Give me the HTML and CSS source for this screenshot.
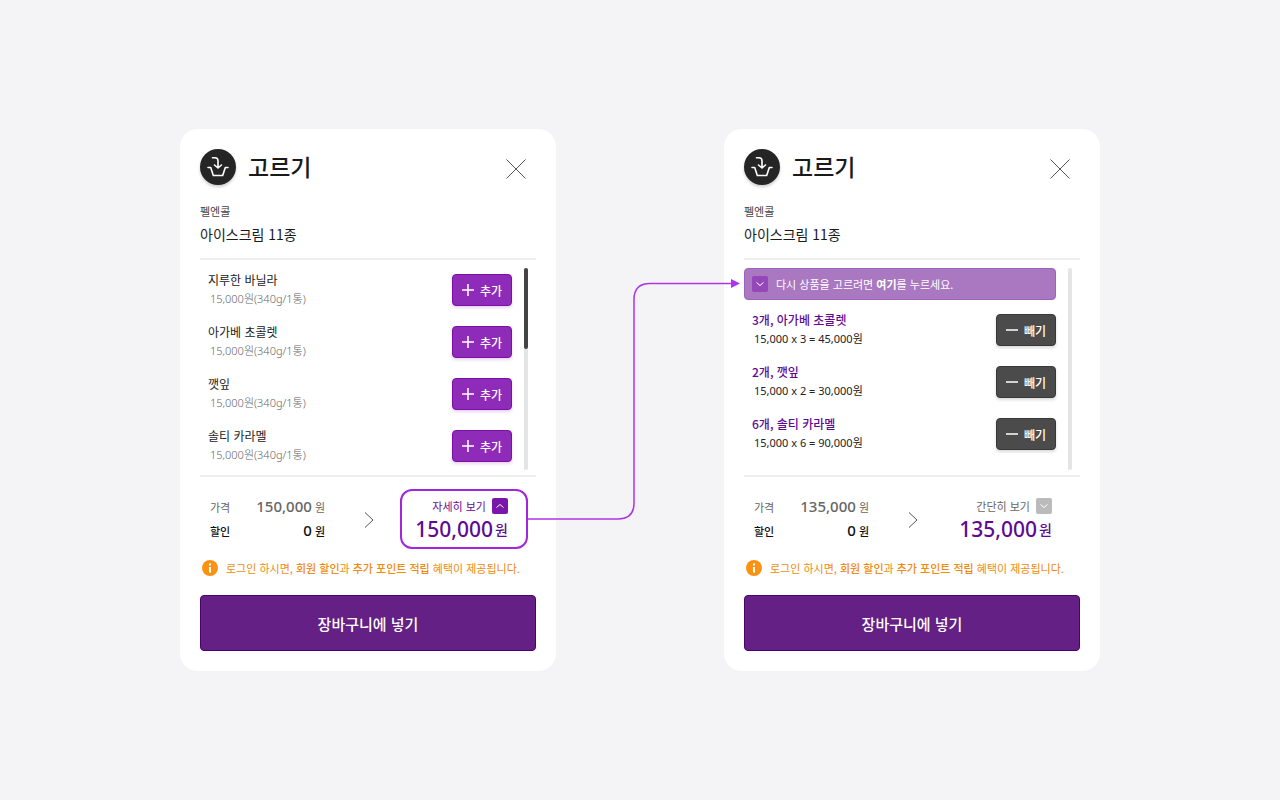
FILE: index.html
```html
<!DOCTYPE html>
<html lang="ko">
<head>
  <meta charset="UTF-8">
  <meta name="viewport" content="width=device-width, initial-scale=1.0">
  <title>고르기</title>
  <link rel="stylesheet" href="styles.css">
</head>
<body>
  <main class="stage">
    <!-- product list -->
    <section class="card">
      <header class="card-header">
        <span class="logo">
          <svg viewBox="0 0 36 36" width="36" height="36">
            <path d="M12.500 8.800h2.500q3 0 3 3V18.500M14.500 16l3.500 3 3.500-3M8 18.500h2.700l2.600 8h9.400l2.600-8H28" />
          </svg>
        </span>
        <h1>고르기</h1>
        <button type="button" class="close" aria-label="닫기">
          <svg viewBox="0 0 20 20" width="20" height="20"><path d="M.5.5l19 19M19.500.5l-19 19" /></svg>
        </button>
      </header>
      <p class="brand">펠엔콜</p>
      <h2>아이스크림 11종</h2>

      <div class="list-area">
        <ul class="list">
          <li>
            <div><p class="name">지루한 바닐라</p><p class="price">15,000원(340g/1통)</p></div>
            <button type="button" class="add"><svg viewBox="0 0 12 12" width="12" height="12"><path d="M6 0v12M0 6h12" /></svg>추가</button>
          </li>
          <li>
            <div><p class="name">아가베 초콜렛</p><p class="price">15,000원(340g/1통)</p></div>
            <button type="button" class="add"><svg viewBox="0 0 12 12" width="12" height="12"><path d="M6 0v12M0 6h12" /></svg>추가</button>
          </li>
          <li>
            <div><p class="name">깻잎</p><p class="price">15,000원(340g/1통)</p></div>
            <button type="button" class="add"><svg viewBox="0 0 12 12" width="12" height="12"><path d="M6 0v12M0 6h12" /></svg>추가</button>
          </li>
          <li>
            <div><p class="name">솔티 카라멜</p><p class="price">15,000원(340g/1통)</p></div>
            <button type="button" class="add"><svg viewBox="0 0 12 12" width="12" height="12"><path d="M6 0v12M0 6h12" /></svg>추가</button>
          </li>
        </ul>
        <div class="track"><div class="thumb"></div></div>
      </div>

      <div class="summary">
        <dl class="amounts">
          <div><dt>가격</dt><dd><b>150,000</b> 원</dd></div>
          <div class="discount"><dt>할인</dt><dd><b>0</b> 원</dd></div>
        </dl>
        <svg class="arrow" viewBox="0 0 10 16" width="10" height="16"><path d="M1 .5L9 8l-8 7.500" /></svg>
        <div class="total outlined">
          <button type="button" class="toggle">자세히 보기
            <span class="toggle-icon"><svg viewBox="0 0 16 16" width="16" height="16"><path d="M4.500 9.500L8 6.500l3.500 3" /></svg></span>
          </button>
          <p class="sum"><b>150,000</b><span>원</span></p>
        </div>
      </div>

      <p class="notice">
        <svg viewBox="0 0 16 16" width="16" height="16"><circle cx="8" cy="8" r="8" /><path d="M8 3.500v2M8 7v5.500" /></svg>
        <span>로그인 하시면, <b>회원 할인</b>과 <b>추가 포인트 적립</b> 혜택이 제공됩니다.</span>
      </p>
      <button type="button" class="cart">장바구니에 넣기</button>
    </section>

    <div class="connector">
      <svg viewBox="0 0 212 244" width="212" height="244">
        <path class="line" d="M0 239h90q16 0 16-16V19.500q0-16 16-16h82" />
        <path class="head" d="M203-1l9 4.500-9 4.500z" />
      </svg>
    </div>

    <!-- picked items -->
    <section class="card">
      <header class="card-header">
        <span class="logo">
          <svg viewBox="0 0 36 36" width="36" height="36">
            <path d="M12.500 8.800h2.500q3 0 3 3V18.500M14.500 16l3.500 3 3.500-3M8 18.500h2.700l2.600 8h9.400l2.600-8H28" />
          </svg>
        </span>
        <h1>고르기</h1>
        <button type="button" class="close" aria-label="닫기">
          <svg viewBox="0 0 20 20" width="20" height="20"><path d="M.5.5l19 19M19.500.5l-19 19" /></svg>
        </button>
      </header>
      <p class="brand">펠엔콜</p>
      <h2>아이스크림 11종</h2>

      <div class="list-area">
        <div class="picked">
          <button type="button" class="back">
            <span class="toggle-icon"><svg viewBox="0 0 16 16" width="16" height="16"><path d="M4.500 6.500L8 9.500l3.500-3" /></svg></span>
            <span>다시 상품을 고르려면 <b>여기</b>를 누르세요.</span>
          </button>
          <ul class="list">
            <li>
              <div><p class="name">3개, 아가베 초콜렛</p><p class="price">15,000 x 3 = 45,000원</p></div>
              <button type="button" class="remove"><svg viewBox="0 0 12 12" width="12" height="12"><path d="M0 6h12" /></svg>빼기</button>
            </li>
            <li>
              <div><p class="name">2개, 깻잎</p><p class="price">15,000 x 2 = 30,000원</p></div>
              <button type="button" class="remove"><svg viewBox="0 0 12 12" width="12" height="12"><path d="M0 6h12" /></svg>빼기</button>
            </li>
            <li>
              <div><p class="name">6개, 솔티 카라멜</p><p class="price">15,000 x 6 = 90,000원</p></div>
              <button type="button" class="remove"><svg viewBox="0 0 12 12" width="12" height="12"><path d="M0 6h12" /></svg>빼기</button>
            </li>
          </ul>
        </div>
        <div class="track"></div>
      </div>

      <div class="summary">
        <dl class="amounts">
          <div><dt>가격</dt><dd><b>135,000</b> 원</dd></div>
          <div class="discount"><dt>할인</dt><dd><b>0</b> 원</dd></div>
        </dl>
        <svg class="arrow" viewBox="0 0 10 16" width="10" height="16"><path d="M1 .5L9 8l-8 7.500" /></svg>
        <div class="total">
          <button type="button" class="toggle muted">간단히 보기
            <span class="toggle-icon"><svg viewBox="0 0 16 16" width="16" height="16"><path d="M4.500 6.500L8 9.500l3.500-3" /></svg></span>
          </button>
          <p class="sum"><b>135,000</b><span>원</span></p>
        </div>
      </div>

      <p class="notice">
        <svg viewBox="0 0 16 16" width="16" height="16"><circle cx="8" cy="8" r="8" /><path d="M8 3.500v2M8 7v5.500" /></svg>
        <span>로그인 하시면, <b>회원 할인</b>과 <b>추가 포인트 적립</b> 혜택이 제공됩니다.</span>
      </p>
      <button type="button" class="cart">장바구니에 넣기</button>
    </section>
  </main>
</body>
</html>
```
FILE: styles.css
```css
* {
  box-sizing: border-box;
}

body {
  margin: 0;
  font-family: "Noto Sans CJK KR", sans-serif;
  font-size: 12px;
  color: #1a1a1a;
  background-color: #f4f4f7;
}

h1, h2, p, ul, dl, dd {
  margin: 0;
  padding: 0;
}

ul {
  list-style: none;
}

button {
  font: inherit;
  color: inherit;
  padding: 0;
  border: none;
  background: none;
  cursor: pointer;
}

svg {
  display: block;
  flex: none;
  fill: none;
  stroke: currentColor;
}

.stage {
  display: flex;
  justify-content: center;
  align-content: center;
  min-height: 100vh;
  flex-wrap: wrap;
}

.card {
  display: flex;
  flex-direction: column;
  width: 376px;
  padding: 20px;
  border-radius: 18px;
  background-color: white;
}

.card-header {
  display: flex;
  align-items: center;
  gap: 12px;
  height: 36px;
}

.logo {
  border-radius: 50%;
  color: white;
  background-color: #252525;
  box-shadow: 0 2px 3px rgba(0, 0, 0, 0.2);
}

.logo svg {
  stroke-width: 1.6;
  stroke-linecap: round;
  stroke-linejoin: round;
}

h1 {
  font-size: 23px;
  line-height: 34px;
  padding-bottom: 2px;
  font-weight: 500;
}

.close {
  margin: 4px 10px 0 auto;
  color: #555;
}

.brand {
  margin-top: 18px;
  font-size: 11px;
  line-height: 16px;
  color: #444;
}

h2 {
  margin: 3px 0 12px;
  font-size: 14px;
  line-height: 24px;
  font-weight: 400;
}

/* list */
.list-area {
  display: flex;
  flex: 1;
  gap: 12px;
  padding: 4px 8px 3px 0;
  border-top: 2px solid #eee;
  border-bottom: 2px solid #eee;
}

.list, .picked {
  flex: 1;
}

.list li {
  display: flex;
  align-items: center;
  justify-content: space-between;
  height: 52px;
  padding-left: 8px;
}

.name {
  line-height: 19px;
}

.price {
  padding: 0 0 2px 2px;
  font-family: "Noto Sans", "Noto Sans CJK KR", sans-serif;
  line-height: 19px;
  font-weight: 300;
  font-size: 11px;
  color: #666;
}

.picked .name {
  font-weight: 500;
  color: #5f0a94;
}

.picked .price {
  font-weight: 400;
  color: #222;
}

.add, .remove {
  display: flex;
  align-items: center;
  justify-content: center;
  gap: 6px;
  width: 60px;
  height: 32px;
  border-radius: 4px;
  font-weight: 500;
  color: white;
}

.add svg, .remove svg {
  stroke-width: 1.5;
}

.add {
  border: 1px solid #7b0fa8;
  background-color: #8f2bb9;
  box-shadow: 0 2px 3px rgba(143, 43, 185, 0.2);
}

.remove {
  border: 1px solid #383838;
  background-color: #4b4b4b;
  box-shadow: 0 2px 3px rgba(0, 0, 0, 0.15);
}

.back {
  display: flex;
  align-items: center;
  gap: 8px;
  width: 100%;
  height: 32px;
  margin: 4px 0;
  padding: 0 7px;
  border: 1px solid #9d62bb;
  border-radius: 4px;
  font-size: 11px;
  color: white;
  background-color: #a978c1;
}

.track {
  width: 4px;
  margin: 4px 0 2px;
  border-radius: 2px;
  background-color: #e5e5e5;
}

.thumb {
  height: 40%;
  border-radius: 2px;
  background-color: #444;
}

/* price summary */
.summary {
  display: flex;
  align-items: center;
  margin-top: 12px;
  padding: 0 8px 0 10px;
}

.amounts {
  width: 115px;
  font-size: 11px;
}

.amounts div {
  display: flex;
  align-items: center;
  justify-content: space-between;
  height: 24px;
  line-height: 24px;
  color: #666;
}

.amounts b {
  font-family: "Noto Sans", sans-serif;
  font-size: 15px;
  line-height: 20px;
  font-weight: 500;
}

.amounts .discount {
  font-weight: 500;
  color: #111;
}

.arrow {
  margin: 2px auto 0 39px;
  color: #555;
}

.total {
  width: 128px;
  height: 60px;
  padding: 6px 18px 0 0;
  border: 2px solid transparent;
  border-radius: 12px;
  text-align: right;
  color: #5f0a94;
}

.outlined {
  border-color: #a226dd;
}

.toggle {
  display: inline-flex;
  align-items: center;
  gap: 6px;
  font-size: 11px;
  line-height: 18px;
}

.muted {
  color: #666;
}

.toggle-icon {
  border-radius: 2px;
  color: white;
  background-color: #7a16a8;
}

.muted .toggle-icon {
  background-color: #bbb;
}

.back .toggle-icon {
  background-color: #9447b8;
}

.sum {
  display: flex;
  align-items: center;
  justify-content: flex-end;
  gap: 2px;
  font-size: 14px;
  line-height: 28px;
  font-weight: 500;
}

.sum b {
  font-family: "Noto Sans", sans-serif;
  font-size: 21px;
  font-weight: 500;
}

.notice {
  display: flex;
  align-items: center;
  gap: 8px;
  margin: 9px 0 17px;
  padding-left: 2px;
  font-size: 11px;
  line-height: 20px;
  color: #f08a10;
}

.notice b {
  font-weight: 500;
}

.notice circle {
  fill: #fa9214;
  stroke: none;
}

.notice path {
  stroke: white;
  stroke-width: 2;
}

.cart {
  height: 56px;
  border: 1px solid #470469;
  border-radius: 4px;
  font-size: 15px;
  font-weight: 500;
  color: white;
  background-color: #642084;
}

/* line from the total box to the banner of the second card */
.connector {
  position: relative;
  width: 168px;
}

.connector svg {
  position: absolute;
  top: 151px;
  left: -28px;
  overflow: visible;
}

.connector .line {
  stroke: #ab35e5;
  stroke-width: 1.5;
}

.connector .head {
  fill: #b030f5;
  stroke: none;
}
```
